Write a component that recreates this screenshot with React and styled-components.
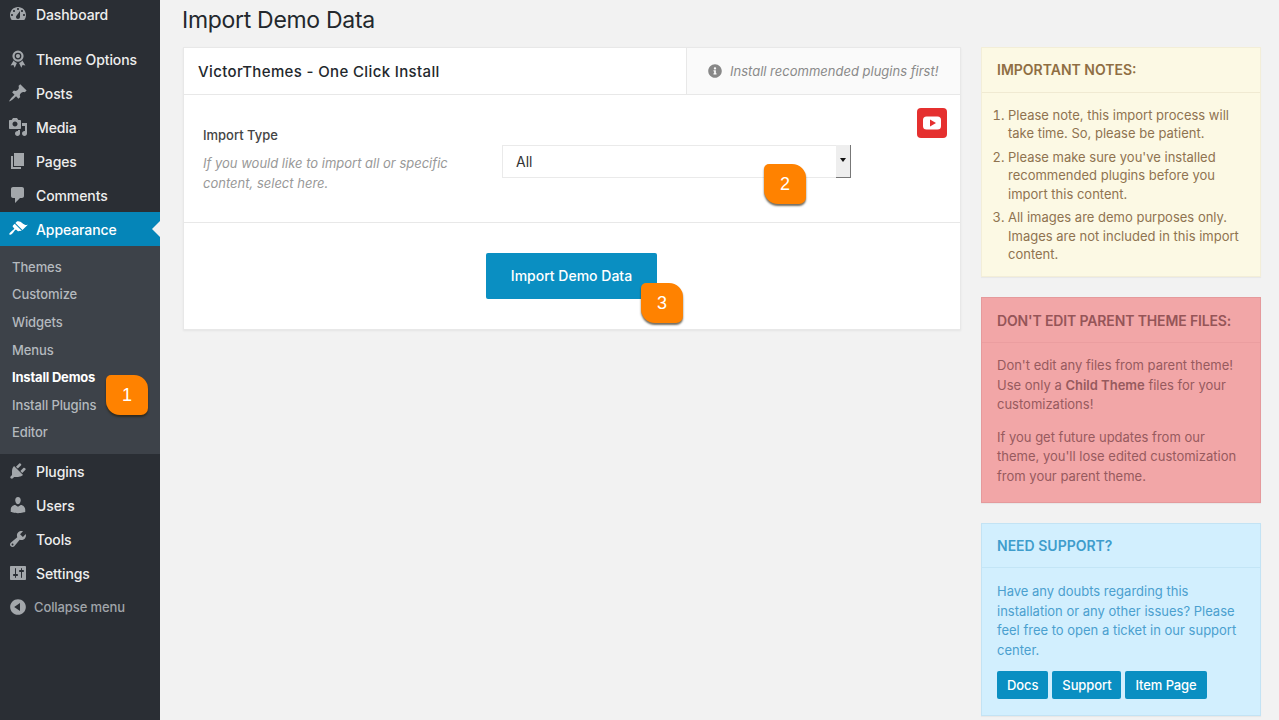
import styled, { createGlobalStyle } from "styled-components";
import { FaInfoCircle } from "react-icons/fa";

const GlobalStyle = createGlobalStyle`
  html, body {
    margin: 0;
    padding: 0;
    height: 720px;
    overflow: hidden;
    background: #f2f2f2;
    font-family: "Inter", "Liberation Sans", sans-serif;
    -webkit-font-smoothing: antialiased;
  }
  * {
    box-sizing: border-box;
  }
`;

const icons = {
  dashboard:
    "M3.76 16h12.48c1.1-1.37 1.76-3.11 1.76-5 0-4.42-3.58-8-8-8s-8 3.58-8 8c0 1.89.66 3.63 1.76 5zM10 4c.55 0 1 .45 1 1s-.45 1-1 1-1-.45-1-1 .45-1 1-1zM6 6c.55 0 1 .45 1 1s-.45 1-1 1-1-.45-1-1 .45-1 1-1zm8 0c.55 0 1 .45 1 1s-.45 1-1 1-1-.45-1-1 .45-1 1-1zm-5.37 5.55L12 7v6c0 1.1-.9 2-2 2s-2-.9-2-2c0-.57.24-1.08.63-1.45zM4 10c.55 0 1 .45 1 1s-.45 1-1 1-1-.45-1-1 .45-1 1-1zm12 0c.55 0 1 .45 1 1s-.45 1-1 1-1-.45-1-1 .45-1 1-1z",
  award:
    "M10 1.5a5.6 5.6 0 1 0 0 11.2 5.6 5.6 0 0 0 0-11.2zm0 2.2a3.4 3.4 0 1 1 0 6.8 3.4 3.4 0 0 1 0-6.8zM5.6 11.6 2.6 16.4l2.8-.3 1.3 2.6 2.2-4.6c-1.3-.4-2.5-1.3-3.3-2.5zm8.8 0c-.8 1.2-2 2.1-3.3 2.5l2.2 4.6 1.3-2.6 2.8.3z M10 5a2.1 2.1 0 1 0 0 4.2A2.1 2.1 0 0 0 10 5z",
  posts:
    "M10.44 3.02l1.82-1.82 6.36 6.35-1.83 1.82c-1.05-.68-2.48-.57-3.41.36l-.75.75c-.92.93-1.04 2.35-.35 3.41l-1.83 1.82-2.41-2.41-2.8 2.79c-.42.42-3.38 2.71-3.8 2.29s1.86-3.39 2.28-3.81l2.79-2.79L4.1 9.36l1.83-1.82c1.05.69 2.48.57 3.4-.36l.75-.75c.93-.92 1.05-2.35.36-3.41z",
  media:
    "M13 11V4c0-.55-.45-1-1-1h-1.67L9 1H5L3.67 3H2c-.55 0-1 .45-1 1v7c0 .55.45 1 1 1h10c.55 0 1-.45 1-1zM7 4.5c1.38 0 2.5 1.12 2.5 2.5S8.38 9.5 7 9.5 4.5 8.38 4.5 7 5.62 4.5 7 4.5zM14 6h5v10.5c0 1.38-1.12 2.5-2.5 2.5S14 17.88 14 16.5s1.12-2.5 2.5-2.5c.17 0 .34.02.5.05V9h-3V6zm-4 8.05V13h2v3.5c0 1.38-1.12 2.5-2.5 2.5S7 17.88 7 16.5 8.12 14 9.5 14c.17 0 .34.02.5.05z",
  pages: "M6 15V2h10v13H6zm-1 1h8v2H3V5h2v11z",
  comments:
    "M5 2h9c1.1 0 2 .9 2 2v7c0 1.1-.9 2-2 2h-2l-5 5v-5H5c-1.1 0-2-.9-2-2V4c0-1.1.9-2 2-2z",
  appearance:
    "M14.48 11.06L7.41 3.99l1.5-1.5c.5-.56 2.3-.47 3.51.32 1.21.8 1.43 1.28 2.91 2.1 1.18.64 2.45 1.26 4.45.85zm-.71.71L6.7 4.7 4.93 6.47c-.39.39-.39 1.02 0 1.41l1.06 1.06c.39.39.39 1.03 0 1.42-.6.6-1.43 1.11-2.21 1.69-.35.26-.7.53-1.01.84C1.43 13.71.96 15.12 1.39 15.55c.43.43 1.84-.04 3.21-1.41.31-.31.58-.66.84-1.01.58-.78 1.09-1.61 1.69-2.21.39-.39 1.03-.39 1.42 0l1.06 1.06c.39.39 1.02.39 1.41 0z",
  plugins:
    "M13.11 4.36L9.87 7.6 8 5.73l3.24-3.24c.35-.34 1.05-.2 1.56.32.52.51.66 1.21.31 1.55zm-8 1.77l.91-1.12 9.01 9.01-1.19.84c-.71.71-2.63 1.16-3.82 1.16H6.14L4.9 17.26c-.59.59-1.54.59-2.12 0-.59-.58-.59-1.53 0-2.12l1.24-1.24v-3.88c0-1.13.4-3.19 1.09-3.89zm7.26 3.97l3.24-3.24c.34-.35 1.04-.21 1.55.31.52.51.66 1.21.31 1.55l-3.24 3.25z",
  users:
    "M10 9.25c-2.27 0-2.73-3.44-2.73-3.44C7 4.02 7.82 2 9.97 2c2.16 0 2.98 2.02 2.71 3.81 0 0-.41 3.44-2.68 3.44zm0 2.57L12.72 10c2.39 0 4.52 2.33 4.52 4.53v2.49s-3.65 1.13-7.24 1.13c-3.65 0-7.24-1.13-7.24-1.13v-2.49c0-2.25 1.94-4.48 4.47-4.48z",
  tools:
    "M16.68 9.77c-1.34 1.34-3.3 1.67-4.95.99l-5.41 6.52c-.99.99-2.59.99-3.58 0s-.99-2.59 0-3.57l6.52-5.42c-.68-1.65-.35-3.61.99-4.95 1.28-1.28 3.12-1.62 4.72-1.06l-2.89 2.89 2.82 2.82 2.86-2.87c.53 1.58.18 3.39-1.08 4.65zM3.81 16.21c.4.39 1.04.39 1.43 0 .4-.4.4-1.04 0-1.43-.39-.4-1.03-.4-1.43 0-.39.39-.39 1.03 0 1.43z",
  settings:
    "M18 16V4c0-.55-.45-1-1-1H3c-.55 0-1 .45-1 1v12c0 .55.45 1 1 1h14c.55 0 1-.45 1-1zM8 11h1c.55 0 1 .45 1 1s-.45 1-1 1H8v1.5c0 .28-.22.5-.5.5s-.5-.22-.5-.5V13H6c-.55 0-1-.45-1-1s.45-1 1-1h1V5.5c0-.28.22-.5.5-.5s.5.22.5.5V11zm5-2h-1c-.55 0-1-.45-1-1s.45-1 1-1h1V5.5c0-.28.22-.5.5-.5s.5.22.5.5V7h1c.55 0 1 .45 1 1s-.45 1-1 1h-1v5.5c0 .28-.22.5-.5.5s-.5-.22-.5-.5V9z",
  collapse:
    "M10 2.16c4.33 0 7.84 3.51 7.84 7.84s-3.51 7.84-7.84 7.84S2.16 14.33 2.16 10 5.71 2.16 10 2.16zm2 11.72V6.12L6.18 9.97z",
};

const Page = styled.div`
  display: flex;
  width: 1279px;
  height: 720px;
`;

const Sidebar = styled.nav`
  width: 160px;
  flex-shrink: 0;
  background: #2a2e34;
  display: flex;
  flex-direction: column;
`;

const MenuRow = styled.div`
  display: flex;
  align-items: center;
  position: relative;
  height: ${(p) => p.$height || 34}px;
  margin-bottom: ${(p) => p.$after || 0}px;
  padding-left: 8px;
  font-size: 14px;
  font-weight: 500;
  letter-spacing: -0.1px;
  color: ${(p) => (p.$active ? "#fff" : "#eee")};
  background: ${(p) => (p.$active ? "#0585b8" : "transparent")};
  & svg {
    fill: ${(p) => (p.$active ? "#fff" : "#a3a7ab")};
  }
  ${(p) =>
    p.$active &&
    `&:after {
      content: "";
      position: absolute;
      right: 0;
      top: 50%;
      margin-top: -8px;
      border: 8px solid transparent;
      border-left-width: 0;
      border-right-color: #f2f2f2;
    }`}
`;

const MenuIcon = styled.svg`
  width: 20px;
  height: 20px;
  margin-right: 8px;
  flex-shrink: 0;
`;

const SubMenu = styled.div`
  background: #3d4249;
  height: 208px;
  padding-top: 7px;
  position: relative;
`;

const SubItem = styled.div`
  height: 27.6px;
  padding-left: 12px;
  display: flex;
  align-items: center;
  font-size: 13px;
  font-weight: ${(p) => (p.$current ? 700 : 500)};
  letter-spacing: ${(p) => (p.$current ? "-0.2px" : "-0.1px")};
  color: ${(p) => (p.$current ? "#fff" : "#b4b9be")};
`;

const CollapseRow = styled.div`
  display: flex;
  align-items: center;
  height: 34px;
  padding-left: 8px;
  font-size: 13px;
  font-weight: 500;
  letter-spacing: -0.1px;
  color: #a0a5aa;
  & svg {
    fill: #a3a7ab;
    margin-right: 6px;
  }
`;

const Main = styled.main`
  flex: 1;
  padding: 0 18px 0 22px;
  min-width: 0;
`;

const Title = styled.h1`
  margin: 0;
  height: 47px;
  padding-top: 6px;
  font-size: 23px;
  line-height: 29px;
  font-weight: 400;
  letter-spacing: -0.3px;
  color: #23282d;
`;

const Columns = styled.div`
  display: flex;
  align-items: flex-start;
  padding-left: 1px;
  gap: 20px;
`;

const Panel = styled.section`
  width: 778px;
  height: 283px;
  background: #fff;
  border: 1px solid #e8e8e8;
  box-shadow: 0 1px 2px rgba(0, 0, 0, 0.06);
  position: relative;
`;

const PanelHead = styled.header`
  display: flex;
  height: 47px;
  border-bottom: 1px solid #e8e8e8;
`;

const PanelTitle = styled.h2`
  flex: 1;
  margin: 0;
  padding-left: 14px;
  font-size: 15px;
  line-height: 47px;
  font-weight: 500;
  letter-spacing: 0.36px;
  color: #23282d;
`;

const PanelHint = styled.div`
  width: 274px;
  display: flex;
  align-items: center;
  padding-left: 21px;
  gap: 8px;
  background: #fafafa;
  border-left: 1px solid #e8e8e8;
  font-size: 13px;
  font-style: italic;
  color: #8a8a8a;
  & svg {
    font-size: 14px;
    color: #888;
    flex-shrink: 0;
  }
`;

const PanelBody = styled.div`
  display: flex;
  height: 128px;
  padding: 30px 0 0 19px;
  border-bottom: 1px solid #e8e8e8;
`;

const FieldText = styled.div`
  width: 299px;
`;

const FieldLabel = styled.div`
  font-size: 13px;
  line-height: 20px;
  font-weight: 500;
  color: #444;
  margin-bottom: 8px;
`;

const FieldHelp = styled.div`
  font-size: 13px;
  line-height: 20px;
  font-style: italic;
  color: #999;
  width: 260px;
`;

const SelectBox = styled.div`
  width: 349px;
  height: 33px;
  margin-top: 20px;
  position: relative;
  border: 1px solid #eaeaea;
  padding-left: 13px;
  font-size: 14px;
  line-height: 31px;
  color: #333;
`;

const SelectSpin = styled.div`
  position: absolute;
  right: -1px;
  top: -1px;
  bottom: -1px;
  width: 15px;
  background: #eee;
  border-right: 1px solid #777;
  border-bottom: 1px solid #777;
  &:after {
    content: "";
    position: absolute;
    left: 4px;
    top: 13px;
    border: 3px solid transparent;
    border-bottom-width: 0;
    border-top: 4px solid #111;
  }
`;

const VideoButton = styled.div`
  position: absolute;
  right: 13px;
  top: 60px;
  width: 30px;
  height: 30px;
  border-radius: 4px;
  background: #e5302f;
  display: flex;
  align-items: center;
  justify-content: center;
`;

const PanelFoot = styled.div`
  display: flex;
  justify-content: center;
  padding: 30px 1px 0 0;
`;

const BigButton = styled.div`
  width: 171px;
  height: 46px;
  border-radius: 2px;
  background: #0a8fc2;
  color: #fff;
  font-size: 14px;
  font-weight: 500;
  line-height: 46px;
  text-align: center;
`;

const Badge = styled.div`
  position: absolute;
  left: ${(p) => p.$left}px;
  top: ${(p) => p.$top}px;
  width: 42px;
  height: 40px;
  border-radius: 5px 14px 7px 14px;
  background: #ff8200;
  box-shadow: 0 2px 2px rgba(40, 30, 10, 0.65);
  color: #fff;
  font-size: 18px;
  font-weight: 400;
  line-height: 40px;
  text-align: center;
  font-family: "Liberation Sans", sans-serif;
  z-index: 2;
`;

const Side = styled.aside`
  width: 280px;
  display: flex;
  flex-direction: column;
  gap: 20px;
`;

const Note = styled.section`
  background: ${(p) => p.$bg};
  border: 1px solid ${(p) => p.$line};
  color: ${(p) => p.$text};
  font-size: 13px;
  line-height: 19.5px;
  box-shadow: 0 1px 1px rgba(0, 0, 0, 0.04);
`;

const NoteHead = styled.h3`
  margin: 0;
  height: ${(p) => p.$height || 45}px;
  padding-left: 15px;
  font-size: 14px;
  font-weight: 600;
  letter-spacing: ${(p) => p.$spacing || 0}px;
  line-height: ${(p) => p.$lh || 44}px;
  color: ${(p) => p.$color};
  border-bottom: 1px solid ${(p) => p.$line};
`;

const NoteBody = styled.div`
  padding: ${(p) => p.$pad};
  & p {
    margin: 0 0 13px;
  }
  & p:last-child {
    margin: 0;
  }
  & strong {
    font-weight: 600;
  }
`;

const NoteList = styled.ol`
  margin: 0;
  padding: 0 0 0 26px;
  & li {
    line-height: 18.2px;
    margin-bottom: 5.7px;
  }
  & li:last-child {
    margin-bottom: 0;
  }
`;

const SupportButtons = styled.div`
  display: flex;
  gap: 4px;
  margin-top: 11px;
`;

const SmallButton = styled.div`
  height: 28px;
  padding: 0 10px;
  border-radius: 2px;
  background: #0a8fc2;
  color: #fff;
  font-size: 13px;
  font-weight: 500;
  letter-spacing: -0.1px;
  line-height: 28px;
`;

const Icon = ({ name }) => (
  <MenuIcon viewBox="0 0 20 20">
    <path d={icons[name]} />
  </MenuIcon>
);

const topMenu = [
  { name: "dashboard", label: "Dashboard", height: 28, after: 14 },
  { name: "award", label: "Theme Options" },
  { name: "posts", label: "Posts" },
  { name: "media", label: "Media" },
  { name: "pages", label: "Pages" },
  { name: "comments", label: "Comments" },
];

const bottomMenu = [
  { name: "plugins", label: "Plugins" },
  { name: "users", label: "Users" },
  { name: "tools", label: "Tools" },
  { name: "settings", label: "Settings" },
];

const subItems = ["Themes", "Customize", "Widgets", "Menus", "Install Demos", "Install Plugins", "Editor"];

export default function App() {
  return (
    <Page>
      <GlobalStyle />
      <Sidebar>
        {topMenu.map((m) => (
          <MenuRow key={m.name} $height={m.height} $after={m.after}>
            <Icon name={m.name} />
            {m.label}
          </MenuRow>
        ))}
        <MenuRow $active>
          <Icon name="appearance" />
          Appearance
        </MenuRow>
        <SubMenu>
          {subItems.map((s) => (
            <SubItem key={s} $current={s === "Install Demos"}>
              {s}
            </SubItem>
          ))}
          <Badge $left={106} $top={129}>1</Badge>
        </SubMenu>
        {bottomMenu.map((m) => (
          <MenuRow key={m.name}>
            <Icon name={m.name} />
            {m.label}
          </MenuRow>
        ))}
        <CollapseRow>
          <Icon name="collapse" />
          Collapse menu
        </CollapseRow>
      </Sidebar>
      <Main>
        <Title>Import Demo Data</Title>
        <Columns>
          <Panel>
            <PanelHead>
              <PanelTitle>VictorThemes - One Click Install</PanelTitle>
              <PanelHint>
                <FaInfoCircle />
                Install recommended plugins first!
              </PanelHint>
            </PanelHead>
            <VideoButton>
              <svg width="18" height="14" viewBox="0 0 18 14">
                <rect x="0" y="0.5" width="18" height="13" rx="3.5" fill="#fff" />
                <path d="M7 3.5v7l6-3.5z" fill="#e5302f" />
              </svg>
            </VideoButton>
            <PanelBody>
              <FieldText>
                <FieldLabel>Import Type</FieldLabel>
                <FieldHelp>If you would like to import all or specific content, select here.</FieldHelp>
              </FieldText>
              <SelectBox>
                All
                <SelectSpin />
              </SelectBox>
            </PanelBody>
            <PanelFoot>
              <BigButton>Import Demo Data</BigButton>
            </PanelFoot>
            <Badge $left={580} $top={116}>2</Badge>
            <Badge $left={457} $top={235}>3</Badge>
          </Panel>
          <Side>
            <Note $bg="#fcf9e4" $line="#f3eed8" $text="#8f7350">
              <NoteHead $color="#8f6e43" $line="#f0ead2">IMPORTANT NOTES:</NoteHead>
              <NoteBody $pad="13px 15px 13px 0">
                <NoteList>
                  <li>Please note, this import process will take time. So, please be patient.</li>
                  <li>Please make sure you've installed recommended plugins before you import this content.</li>
                  <li>All images are demo purposes only. Images are not included in this import content.</li>
                </NoteList>
              </NoteBody>
            </Note>
            <Note $bg="#f2a6a7" $line="#e59a9c" $text="#975a5e">
              <NoteHead $color="#955558" $line="#eb9ea0" $lh={46} $spacing={-0.14}>DON'T EDIT PARENT THEME FILES:</NoteHead>
              <NoteBody $pad="13px 15px 16px">
                <p>
                  Don't edit any files from parent theme! Use only a <strong>Child Theme</strong> files for your customizations!
                </p>
                <p>If you get future updates from our theme, you'll lose edited customization from your parent theme.</p>
              </NoteBody>
            </Note>
            <Note $bg="#d2effe" $line="#c3e3f4" $text="#4ba0cf">
              <NoteHead $color="#3f9dcc" $line="#c3e5f6" $height={44}>NEED SUPPORT?</NoteHead>
              <NoteBody $pad="14px 15px 16px">
                Have any doubts regarding this installation or any other issues? Please feel free to open a ticket in our support center.
                <SupportButtons>
                  <SmallButton>Docs</SmallButton>
                  <SmallButton>Support</SmallButton>
                  <SmallButton>Item Page</SmallButton>
                </SupportButtons>
              </NoteBody>
            </Note>
          </Side>
        </Columns>
      </Main>
    </Page>
  );
}
